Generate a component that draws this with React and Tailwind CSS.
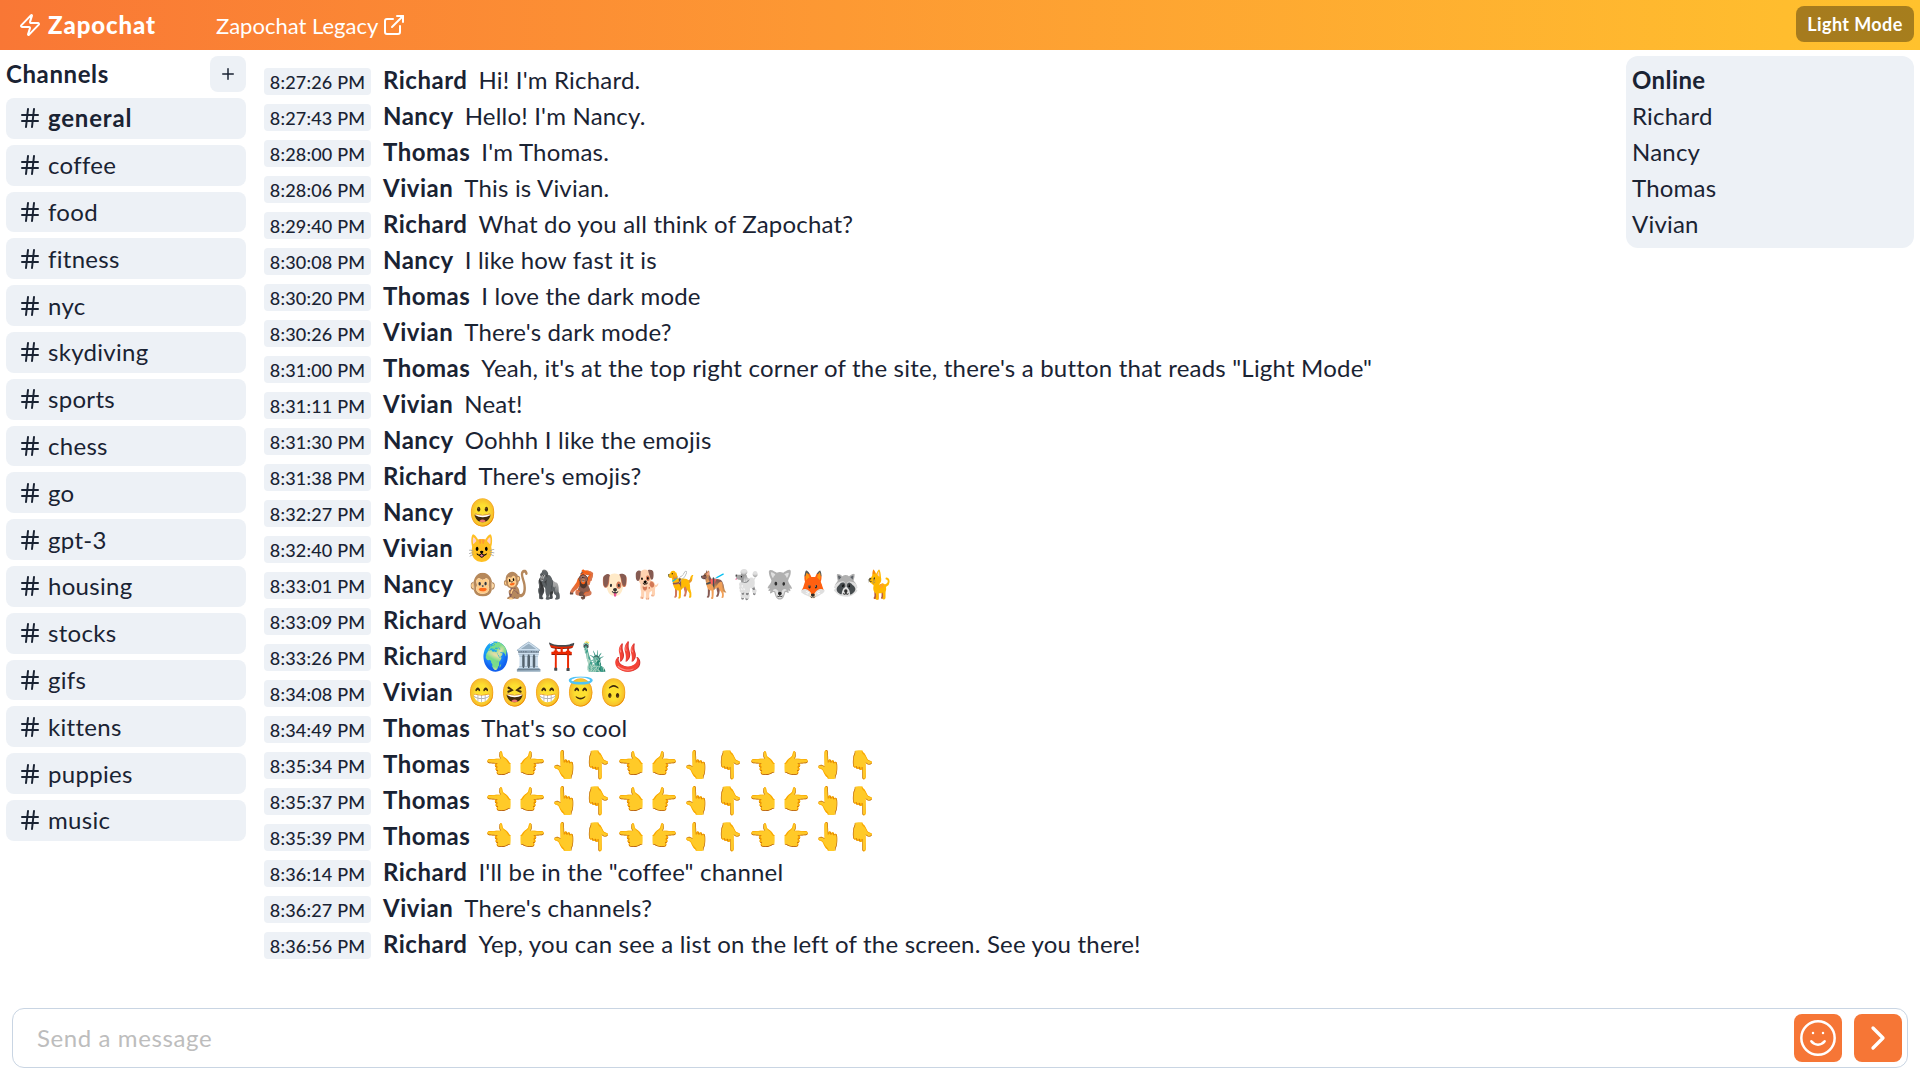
import React from 'react';
import { Zap, ExternalLink, Plus, Smile, ChevronRight, Hash } from 'lucide-react';

const channels = ['general', 'coffee', 'food', 'fitness', 'nyc', 'skydiving', 'sports', 'chess', 'go', 'gpt-3', 'housing', 'stocks', 'gifs', 'kittens', 'puppies', 'music'];
const online = ['Richard', 'Nancy', 'Thomas', 'Vivian'];
const hands = ['👈', '👉', '👆', '👇', '👈', '👉', '👆', '👇', '👈', '👉', '👆', '👇'];

const messages = [
  ['8:27:26 PM', 'Richard', "Hi! I'm Richard."],
  ['8:27:43 PM', 'Nancy', "Hello! I'm Nancy."],
  ['8:28:00 PM', 'Thomas', "I'm Thomas."],
  ['8:28:06 PM', 'Vivian', 'This is Vivian.'],
  ['8:29:40 PM', 'Richard', 'What do you all think of Zapochat?'],
  ['8:30:08 PM', 'Nancy', 'I like how fast it is'],
  ['8:30:20 PM', 'Thomas', 'I love the dark mode'],
  ['8:30:26 PM', 'Vivian', "There's dark mode?"],
  ['8:31:00 PM', 'Thomas', 'Yeah, it\'s at the top right corner of the site, there\'s a button that reads "Light Mode"'],
  ['8:31:11 PM', 'Vivian', 'Neat!'],
  ['8:31:30 PM', 'Nancy', 'Oohhh I like the emojis'],
  ['8:31:38 PM', 'Richard', "There's emojis?"],
  ['8:32:27 PM', 'Nancy', ['😀']],
  ['8:32:40 PM', 'Vivian', ['😺']],
  ['8:33:01 PM', 'Nancy', ['🐵', '🐒', '🦍', '🦧', '🐶', '🐕', '🦮', '🐕‍🦺', '🐩', '🐺', '🦊', '🦝', '🐈']],
  ['8:33:09 PM', 'Richard', 'Woah'],
  ['8:33:26 PM', 'Richard', ['🌍', '🏛️', '⛩️', '🗽', '♨️']],
  ['8:34:08 PM', 'Vivian', ['😁', '😆', '😁', '😇', '🙃']],
  ['8:34:49 PM', 'Thomas', "That's so cool"],
  ['8:35:34 PM', 'Thomas', hands],
  ['8:35:37 PM', 'Thomas', hands],
  ['8:35:39 PM', 'Thomas', hands],
  ['8:36:14 PM', 'Richard', 'I\'ll be in the "coffee" channel'],
  ['8:36:27 PM', 'Vivian', "There's channels?"],
  ['8:36:56 PM', 'Richard', 'Yep, you can see a list on the left of the screen. See you there!'],
];

const App = () => {
  return (
    <div className="flex flex-col h-screen bg-white text-[#1a2333] text-2xl tracking-[0.2px] font-['Lato','Open_Sans',sans-serif] overflow-hidden">
      <header className="flex items-center justify-between h-[50px] shrink-0 pl-[18px] pr-1.5 bg-gradient-to-r from-[#f97735] to-[#ffc22d] text-white">
        <div className="flex items-center">
          <Zap size={24} strokeWidth={2} />
          <span className="ml-1.5 w-[168px] font-black tracking-[0.9px]">Zapochat</span>
          <span className="text-[22px] tracking-normal pt-0.5">Zapochat Legacy</span>
          <ExternalLink size={24} className="ml-1" />
        </div>
        <button className="h-9 w-[118px] mb-0.5 rounded-lg bg-black/35 text-lg font-bold tracking-[0.4px]">Light Mode</button>
      </header>

      <div className="flex flex-1 min-h-0">
        <aside className="w-[258px] shrink-0 pl-1.5 pr-3">
          <div className="flex items-center justify-between h-9 mt-1.5 mb-1.5">
            <span className="font-bold tracking-[0.6px]">Channels</span>
            <button className="flex items-center justify-center size-9 rounded-lg bg-[#edf1f6]">
              <Plus size={18} />
            </button>
          </div>
          <ul className="flex flex-col gap-1.5">
            {channels.map((name, i) => (
              <li key={name} className={`flex items-center h-[40.8px] pl-3 rounded-lg bg-[#edf1f6] ${i === 0 ? 'font-bold tracking-[0.8px]' : 'tracking-[0.3px]'}`}>
                <Hash size={24} className="mr-1.5" />{name}
              </li>
            ))}
          </ul>
        </aside>

        <main className="flex-1 pt-[6px] pl-1.5 min-w-0">
          <div className="mt-1.5">
            {messages.map(([time, user, text], i) => (
              <div key={i} className="flex items-center h-9 leading-9">
                <span className="flex items-center justify-center w-[107px] h-[27px] mt-[3px] rounded bg-[#edf1f6] text-lg font-medium">{time}</span>
                <span className="ml-3 font-bold tracking-[0.5px]">{user}</span>
                {Array.isArray(text) ? (
                  <span className="flex ml-[12px]">
                    {text.map((emoji, j) => (
                      <span key={j} className="flex justify-center w-[33px] text-[22px] scale-y-125">{emoji}</span>
                    ))}
                  </span>
                ) : (
                  <span className="ml-[11px] whitespace-pre">{text}</span>
                )}
              </div>
            ))}
          </div>
        </main>

        <aside className="w-[288px] h-[192px] shrink-0 mt-1.5 mr-1.5 px-1.5 rounded-xl bg-[#edf1f6]">
          <div className="font-bold leading-9 mt-1.5 tracking-[0.4px]">Online</div>
          {online.map((name) => (
            <div key={name} className="leading-9">{name}</div>
          ))}
        </aside>
      </div>

      <div className="shrink-0 pb-3 px-3">
        <div className="flex items-center h-[60px] pl-6 pr-[5px] rounded-xl border border-[#c9d5e3]">
          <input placeholder="Send a message" className="flex-1 outline-none tracking-[0.6px] placeholder:text-[#bdbdbd]" />
          <button className="flex items-center justify-center size-12 rounded-lg bg-[#f67636] text-white">
            <Smile size={40} strokeWidth={1.5} />
          </button>
          <button className="flex items-center justify-center size-12 ml-3 rounded-lg bg-[#f67636] text-white">
            <ChevronRight size={40} strokeWidth={2} />
          </button>
        </div>
      </div>
    </div>
  );
};

export default App;
